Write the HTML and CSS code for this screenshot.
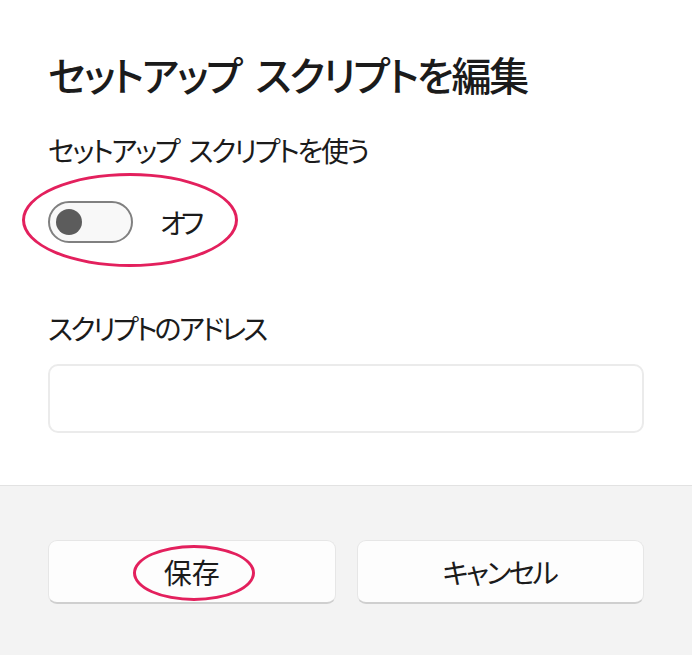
FILE: index.html
```html
<!DOCTYPE html>
<html lang="ja">
<head>
<meta charset="utf-8">
<title>セットアップ スクリプトを編集</title>
<link rel="stylesheet" href="styles.css">
</head>
<body>
<div class="dialog">
  <div class="content">
    <h1 class="title">セットアップ スクリプトを編集</h1>
    <div class="label label-first">セットアップ スクリプトを使う</div>
    <div class="toggle-row">
      <span class="toggle"><span class="knob"></span></span>
      <span class="toggle-text">オフ</span>
      <span class="mark mark-toggle"></span>
    </div>
    <div class="label label-second">スクリプトのアドレス</div>
    <div class="input"></div>
  </div>
  <div class="footer">
    <div class="buttons">
      <button class="btn btn-save">保存<span class="mark mark-save"></span></button>
      <button class="btn btn-cancel">キャンセル</button>
    </div>
  </div>
</div>
</body>
</html>
```

FILE: styles.css
```css
* { box-sizing: border-box; }
html, body {
  margin: 0;
  padding: 0;
  background: #ffffff;
}
body {
  width: 692px;
  height: 655px;
  overflow: hidden;
  font-family: "Noto Sans CJK JP", "Noto Sans", sans-serif;
  font-feature-settings: "palt" 1;
  color: #1b1b1b;
}
.dialog {
  display: flex;
  flex-direction: column;
  height: 655px;
}
.content {
  padding: 48px 48px 52px 48px;
  background: #ffffff;
}
.title {
  margin: 0;
  font-size: 40px;
  line-height: 52px;
  font-weight: 500;
  letter-spacing: -2.2px;
  word-spacing: 8px;
}
.label {
  font-size: 28px;
  line-height: 40px;
  font-weight: 400;
}
.label-first {
  margin-top: 30px;
  letter-spacing: -2.3px;
  word-spacing: 6px;
}
.toggle-row {
  position: relative;
  margin-top: 31px;
  display: flex;
  align-items: center;
  gap: 27px;
  height: 42px;
}
.toggle {
  display: flex;
  align-items: center;
  width: 85px;
  height: 42px;
  border: 2px solid #808080;
  border-radius: 21px;
  background: #f8f8f8;
  padding-left: 6px;
}
.knob {
  width: 26px;
  height: 26px;
  border-radius: 50%;
  background: #5c5c5c;
}
.toggle-text {
  font-size: 28px;
  line-height: 40px;
  letter-spacing: -5px;
}
.mark {
  position: absolute;
  border: 3px solid #e3205d;
  border-radius: 50%;
  pointer-events: none;
}
.mark-toggle {
  left: -26px;
  top: -28px;
  width: 216px;
  height: 94px;
}
.label-second {
  margin-top: 65px;
  letter-spacing: -2.8px;
}
.input {
  margin-top: 16px;
  height: 69px;
  border: 2px solid #ebebeb;
  border-radius: 10px;
  background: #ffffff;
}
.footer {
  flex: 1;
  background: #f3f3f3;
  border-top: 1px solid #e2e2e2;
  padding: 54px 48px 0 48px;
}
.buttons {
  display: grid;
  grid-template-columns: 1fr 1fr;
  gap: 21px;
}
.btn {
  position: relative;
  height: 64px;
  margin: 0;
  padding: 0;
  font-family: "Noto Sans CJK JP", "Noto Sans", sans-serif;
  font-feature-settings: "palt" 1;
  font-size: 28px;
  line-height: 40px;
  color: #1b1b1b;
  background: #fdfdfd;
  border: 1px solid #e6e6e6;
  border-bottom: 2px solid #cfcfcf;
  border-radius: 9px;
}
.btn-cancel {
  letter-spacing: -2.6px;
  text-indent: -2px;
}
.mark-save {
  left: 84px;
  top: 4px;
  width: 122px;
  height: 56px;
}
```
